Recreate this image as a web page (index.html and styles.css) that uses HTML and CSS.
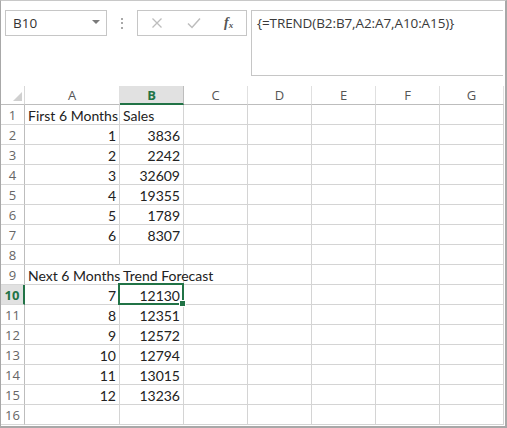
FILE: index.html
```html
<!DOCTYPE html>
<html>
<head>
<meta charset="utf-8">
<link rel="stylesheet" href="styles.css">
</head>
<body>
<div class="app">
  <div class="topbar">
    <div class="namebox">
      <span class="name">B10</span>
      <svg class="arrow" width="8" height="4" viewBox="0 0 8 4"><path d="M0 0H8L4 4Z" fill="#7a7a7a"/></svg>
    </div>
    <div class="grip"><i></i><i></i><i></i></div>
    <div class="fbuttons">
      <svg class="btn" width="12" height="12" viewBox="0 0 12 12"><path d="M1.5 1.5L10.5 10.5M10.5 1.5L1.5 10.5" stroke="#bdbdbd" stroke-width="1.3" fill="none"/></svg>
      <svg class="btn" width="14" height="12" viewBox="0 0 14 12"><path d="M1 6.5L5 10.5L13 1.5" stroke="#bdbdbd" stroke-width="1.5" fill="none"/></svg>
      <span class="fx">f<sub>x</sub></span>
    </div>
    <div class="formula">{=TREND(B2:B7,A2:A7,A10:A15)}</div>
  </div>
  <div class="sheet">
    <div class="corner"><svg width="9" height="9" viewBox="0 0 9 9"><path d="M9 0V9H0Z" fill="#d0d0d0"/></svg></div>
    <div class="ch">A</div>
    <div class="ch sel">B</div>
    <div class="ch">C</div>
    <div class="ch">D</div>
    <div class="ch">E</div>
    <div class="ch">F</div>
    <div class="ch">G</div>

    <div class="rh">1</div><div class="c">First 6 Months</div><div class="c">Sales</div><div class="c"></div><div class="c"></div><div class="c"></div><div class="c"></div><div class="c"></div>
    <div class="rh">2</div><div class="c n">1</div><div class="c n">3836</div><div class="c"></div><div class="c"></div><div class="c"></div><div class="c"></div><div class="c"></div>
    <div class="rh">3</div><div class="c n">2</div><div class="c n">2242</div><div class="c"></div><div class="c"></div><div class="c"></div><div class="c"></div><div class="c"></div>
    <div class="rh">4</div><div class="c n">3</div><div class="c n">32609</div><div class="c"></div><div class="c"></div><div class="c"></div><div class="c"></div><div class="c"></div>
    <div class="rh">5</div><div class="c n">4</div><div class="c n">19355</div><div class="c"></div><div class="c"></div><div class="c"></div><div class="c"></div><div class="c"></div>
    <div class="rh">6</div><div class="c n">5</div><div class="c n">1789</div><div class="c"></div><div class="c"></div><div class="c"></div><div class="c"></div><div class="c"></div>
    <div class="rh">7</div><div class="c n">6</div><div class="c n">8307</div><div class="c"></div><div class="c"></div><div class="c"></div><div class="c"></div><div class="c"></div>
    <div class="rh">8</div><div class="c"></div><div class="c"></div><div class="c"></div><div class="c"></div><div class="c"></div><div class="c"></div><div class="c"></div>
    <div class="rh">9</div><div class="c over">Next 6 Months</div><div class="c over">Trend Forecast</div><div class="c"></div><div class="c"></div><div class="c"></div><div class="c"></div><div class="c"></div>
    <div class="rh sel">10</div><div class="c n">7</div><div class="c n active">12130</div><div class="c"></div><div class="c"></div><div class="c"></div><div class="c"></div><div class="c"></div>
    <div class="rh">11</div><div class="c n">8</div><div class="c n">12351</div><div class="c"></div><div class="c"></div><div class="c"></div><div class="c"></div><div class="c"></div>
    <div class="rh">12</div><div class="c n">9</div><div class="c n">12572</div><div class="c"></div><div class="c"></div><div class="c"></div><div class="c"></div><div class="c"></div>
    <div class="rh">13</div><div class="c n">10</div><div class="c n">12794</div><div class="c"></div><div class="c"></div><div class="c"></div><div class="c"></div><div class="c"></div>
    <div class="rh">14</div><div class="c n">11</div><div class="c n">13015</div><div class="c"></div><div class="c"></div><div class="c"></div><div class="c"></div><div class="c"></div>
    <div class="rh">15</div><div class="c n">12</div><div class="c n">13236</div><div class="c"></div><div class="c"></div><div class="c"></div><div class="c"></div><div class="c"></div>
    <div class="rh">16</div><div class="c"></div><div class="c"></div><div class="c"></div><div class="c"></div><div class="c"></div><div class="c"></div><div class="c"></div>
  </div>
</div>
</body>
</html>
```
FILE: styles.css
```css
* { box-sizing: border-box; }
html, body { margin: 0; padding: 0; background: #fff; }
.app {
  width: 507px;
  height: 428px;
  border-left: 1px solid #a8a8a8;
  border-top: 1px solid #c8c8c8;
  border-right: 2px solid #a8a8a8;
  border-bottom: 2px solid #a8a8a8;
  overflow: hidden;
  font-family: "Open Sans", "Liberation Sans", sans-serif;
}
.topbar {
  height: 85px;
  display: flex;
  align-items: flex-start;
  padding-top: 9px;
  padding-left: 4px;
}
.namebox {
  width: 102px;
  height: 26px;
  border: 1px solid #c6c6c6;
  display: flex;
  align-items: center;
  justify-content: space-between;
  padding: 0 6px 0 7px;
  color: #333;
  font-size: 13.5px;
}
.arrow { margin-top: -2px; }
.grip {
  width: 30px;
  height: 26px;
  display: flex;
  flex-direction: column;
  align-items: center;
  justify-content: center;
  gap: 2.5px;
}
.grip i { display: block; width: 2px; height: 2px; background: #a9a9a9; }
.fbuttons {
  width: 110px;
  height: 26px;
  border: 1px solid #c6c6c6;
  display: flex;
  align-items: center;
  padding-left: 13px;
}
.fbuttons .btn:nth-child(1) { margin-right: 24px; }
.fbuttons .btn:nth-child(2) { margin-right: 23px; }
.fx {
  font-family: "Liberation Serif", serif;
  font-style: italic;
  font-size: 14px;
  color: #555;
  font-weight: bold;
}
.fx sub { font-size: 9px; vertical-align: -1px; }
.formula {
  margin-left: 4px;
  width: 252px;
  height: 66px;
  border: 1px solid #c6c6c6;
  border-right: none;
  padding: 3px 0 0 5px;
  font-size: 13.5px;
  color: #3a3a3a;
  letter-spacing: -0.1px;
}
.sheet {
  display: grid;
  grid-template-columns: 24px 95px repeat(6, 64px);
  grid-template-rows: 19px repeat(16, 20px);
  font-family: "Lato", "Liberation Sans", sans-serif;
  font-size: 14px;
  color: #222;
}
.corner {
  border-right: 1px solid #d8d8d8;
  border-bottom: 1px solid #bdbdbd;
  display: flex;
  align-items: flex-end;
  justify-content: flex-end;
  padding: 0 2px 3px 0;
}
.ch {
  border-bottom: 1px solid #bdbdbd;
  border-right: 1px solid #e0e0e0;
  text-align: center;
  font-family: "Open Sans", "Liberation Sans", sans-serif;
  font-size: 13px;
  color: #555;
  line-height: 18px;
}
.ch.sel {
  background: #e1e1e1;
  border-bottom: 2px solid #217346;
  color: #217346;
  font-weight: bold;
  border-right-color: #bdbdbd;
}
.rh {
  border-right: 1px solid #bdbdbd;
  border-bottom: 1px solid #d8d8d8;
  text-align: center;
  font-family: "Open Sans", "Liberation Sans", sans-serif;
  font-size: 13px;
  color: #666;
  line-height: 20px;
}
.rh.sel {
  background: #e1e1e1;
  border-right: 2px solid #217346;
  color: #217346;
  font-weight: bold;
}
.c {
  border-right: 1px solid #d4d4d4;
  border-bottom: 1px solid #d4d4d4;
  padding: 0 3px;
  line-height: 21px;
  white-space: nowrap;
}
.c.n { text-align: right; }
.c.over { overflow: visible; position: relative; z-index: 1; border-right-color: transparent; }
.c.over + .c.over { border-right-color: #d4d4d4; }
.c.active { position: relative; }
.c.active::after {
  content: "";
  position: absolute;
  left: -2px;
  top: -2px;
  right: -1px;
  bottom: -1px;
  border: 2px solid #217346;
  z-index: 2;
}
.c.active::before {
  content: "";
  position: absolute;
  right: -3px;
  bottom: -3px;
  width: 5px;
  height: 5px;
  background: #217346;
  border: 1px solid #fff;
  box-sizing: content-box;
  z-index: 3;
}
```
